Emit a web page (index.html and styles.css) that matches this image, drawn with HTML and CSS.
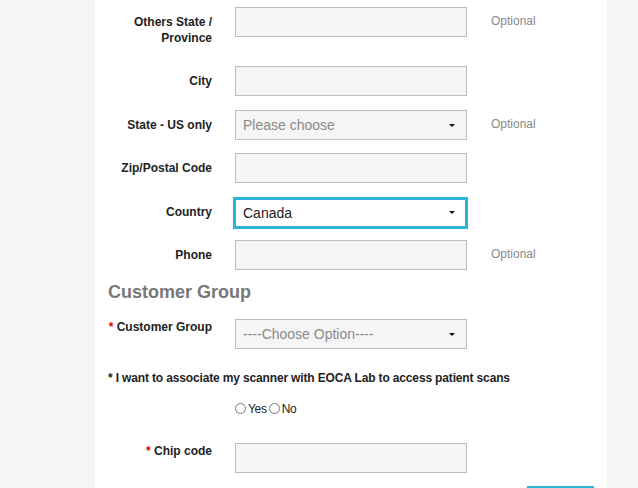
FILE: index.html
```html
<!DOCTYPE html>
<html>
<head>
<meta charset="utf-8">
<link rel="stylesheet" href="styles.css">
</head>
<body>
<div class="page">
  <div class="panel">
    <div class="row row-first">
      <label class="lbl">Others State /<br>Province</label>
      <div class="field"></div>
      <span class="opt">Optional</span>
    </div>
    <div class="row">
      <label class="lbl">City</label>
      <div class="field"></div>
    </div>
    <div class="row">
      <label class="lbl">State - US only</label>
      <div class="field select placeholder">Please choose<span class="caret"></span></div>
      <span class="opt">Optional</span>
    </div>
    <div class="row">
      <label class="lbl">Zip/Postal Code</label>
      <div class="field"></div>
    </div>
    <div class="row">
      <label class="lbl">Country</label>
      <div class="field select focus">Canada<span class="caret"></span></div>
    </div>
    <div class="row">
      <label class="lbl">Phone</label>
      <div class="field"></div>
      <span class="opt">Optional</span>
    </div>
    <h2 class="heading">Customer Group</h2>
    <div class="row row-top">
      <label class="lbl lbl-top"><span class="req">*</span> Customer Group</label>
      <div class="field select placeholder">----Choose Option----<span class="caret"></span></div>
    </div>
    <p class="question">* I want to associate my scanner with EOCA Lab to access patient scans</p>
    <div class="radios">
      <span class="radio"></span><span class="rtext">Yes</span><span class="radio"></span><span class="rtext">No</span>
    </div>
    <div class="row row-top chip">
      <label class="lbl lbl-top"><span class="req">*</span> Chip code</label>
      <div class="field"></div>
    </div>
    <div class="actions"><span class="btn"></span></div>
  </div>
</div>
</body>
</html>
```

FILE: styles.css
```css
html, body {
  margin: 0;
  padding: 0;
  background: #f5f5f5;
}
body {
  font-family: "Liberation Sans", Arial, sans-serif;
  color: #222;
}
.page {
  width: 638px;
  height: 488px;
  overflow: hidden;
}
.panel {
  margin-left: 95px;
  width: 512px;
  height: 600px;
  background: #fff;
  padding-top: 7px;
  box-sizing: border-box;
}
.row {
  display: flex;
  align-items: flex-start;
  margin-bottom: 13.5px;
}
.lbl {
  width: 117px;
  flex: none;
  text-align: right;
  font-weight: 700;
  font-size: 12px;
  line-height: 16px;
  padding: 7px 0;
  margin-right: 23px;
}
.row-first {
  margin-bottom: 13px;
}
.lbl-top {
  padding: 0;
}
.req {
  color: #e00;
}
.field {
  width: 232px;
  height: 30px;
  box-sizing: border-box;
  border: 1px solid #bdbdbd;
  background: #f5f5f5;
  flex: none;
  position: relative;
  font-size: 14px;
  line-height: 28px;
  padding-left: 7px;
}
.select.placeholder {
  color: #8a8a8a;
}
.select.focus {
  background: #fff;
  border: 3px solid #2db5d8;
  width: 235px;
  height: 32px;
  margin-left: -2px;
  margin-bottom: -2px;
  color: #222;
  line-height: 26px;
  padding-left: 7px;
}
.caret {
  position: absolute;
  right: 11px;
  top: 13px;
  width: 0;
  height: 0;
  border-left: 3px solid transparent;
  border-right: 3px solid transparent;
  border-top: 3px solid #111;
}
.focus .caret {
  right: 10px;
  top: 11px;
}
.opt {
  margin-left: 24px;
  font-size: 12px;
  color: #888;
  line-height: 16px;
  padding-top: 6px;
}
.heading {
  margin: -4px 0 0 13px;
  font-size: 18px;
  line-height: 24px;
  font-weight: 700;
  color: #777;
  height: 39px;
}
.row-top {
  margin-bottom: 0;
}
.row-top .lbl {
  width: 104px;
  margin-left: 13px;
  margin-right: 23px;
}
.question {
  margin: 21px 0 0 13px;
  font-size: 12px;
  font-weight: 700;
  line-height: 16px;
  letter-spacing: -0.15px;
}
.radios {
  margin: 15px 0 0 140px;
  display: flex;
  align-items: center;
  height: 16px;
  font-size: 12px;
}
.radio {
  width: 9px;
  height: 9px;
  border: 1px solid #777;
  border-radius: 50%;
  margin-right: 2px;
  background: #fff;
}
.rtext {
  letter-spacing: -0.3px;
  margin-right: 2px;
}
.chip {
  margin-top: 26px;
}
.actions {
  margin-top: 13px;
  margin-left: 432px;
}
.btn {
  display: block;
  width: 67px;
  height: 30px;
  background: #fff;
  border-top: 2px solid #2db5d8;
}
```
